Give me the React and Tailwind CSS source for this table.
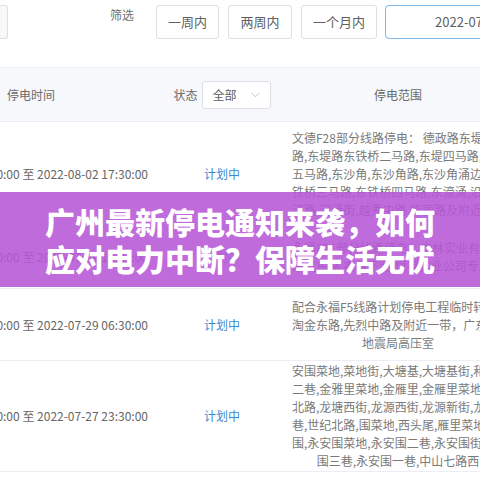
import React from "react";

const rows = [
  {
    h: "h-[104px]",
    time: "2022-08-02 08:00:00 至 2022-08-02 17:30:00",
    full: [
      "文德F28部分线路停电： 德政路东堤二马路,",
      "路,东堤路东铁桥二马路,东堤四马路,东堤",
      "五马路,东沙角,东沙角路,东沙角涌边,东",
      "铁桥三马路,东铁桥四马路,东濠涌,沿江",
    ],
    last: "江路,河涌街,越秀中路,华丽路及附近一带",
  },
  {
    h: "h-[63px]",
    time: "2022-07-29 08:00:00 至 2022-07-29 18:00:00",
    full: [
      "永福F21部分线路停电：农林实业有限公司",
      "东风东路,农林下路,恒福实业公司专变",
    ],
    last: null,
  },
  {
    h: "h-[72px]",
    time: "2022-07-29 00:00:00 至 2022-07-29 06:30:00",
    full: [
      "配合永福F5线路计划停电工程临时转供电：",
      "淘金东路,先烈中路及附近一带，广东省",
    ],
    last: "地震局高压室",
  },
  {
    h: "h-[111px]",
    time: "2022-07-27 08:00:00 至 2022-07-27 23:30:00",
    full: [
      "安围菜地,菜地街,大塘基,大塘基街,和平",
      "二巷,金雅里菜地,金雁里,金雁里菜地,金",
      "北路,龙塘西街,龙源西街,龙源新街,龙源",
      "巷,世纪北路,围菜地,西头尾,雁里菜地,永",
      "围,永安围菜地,永安围二巷,永安围街,永安",
    ],
    last: "围三巷,永安围一巷,中山七路西",
  },
];

function FilterButton({ label, w }) {
  return (
    <div
      className={`${w} h-[34px] shrink-0 flex items-center justify-center border border-[#dcdfe6] rounded-[3px] bg-white text-[13px] text-[#606060] whitespace-nowrap`}
    >
      {label}
    </div>
  );
}

export default function App() {
  return (
    <div className="relative w-[480px] h-[480px] overflow-hidden bg-white font-['Noto_Sans_CJK_SC',sans-serif]">
      {/* filter bar */}
      <div className="h-[68px] border-b border-[#ebeef5] flex items-start pt-[5px]">
        <div className="w-[8px] h-[34px] shrink-0 border border-l-0 border-[#dcdfe6] rounded-r-[3px] bg-[#f7f8fa]" />
        <div className="ml-[102px] mt-[1px] shrink-0 whitespace-nowrap text-[12px] leading-[18px] text-[#707070]">筛选</div>
        <div className="ml-[22px] flex gap-[9px] shrink-0">
          <FilterButton label="一周内" w="w-[63px]" />
          <FilterButton label="两周内" w="w-[64px]" />
          <FilterButton label="一个月内" w="w-[76px]" />
          <div className="ml-[-1px] w-[220px] h-[34px] shrink-0 flex items-center pl-[49px] border border-[#7db6e8] rounded-[4px] bg-white text-[13px] text-[#606060] whitespace-nowrap">
            2022-07-26 至 2022-08-26
          </div>
        </div>
      </div>

      {/* header */}
      <div className="grid grid-cols-[160px_124px_228px] h-[54px] bg-[#f6f8fb] border-b border-[#ebeef5] text-[12px] text-[#6a6a6a]">
        <div className="flex items-center pl-[7px]">停电时间</div>
        <div className="flex items-center justify-center gap-[4px]">
          <span>状态</span>
          <div className="w-[69px] h-[28px] flex items-center justify-between pl-[10px] pr-[10px] border border-[#dcdfe6] rounded-[3px] bg-white text-[12px] text-[#606060]">
            <span>全部</span>
            <svg width="9" height="6" viewBox="0 0 9 6" fill="none">
              <polyline points="0.5,0.8 4.5,4.8 8.5,0.8" stroke="#c0c4cc" strokeWidth="1" />
            </svg>
          </div>
        </div>
        <div className="flex items-center justify-center">停电范围</div>
      </div>

      {/* rows */}
      {rows.map((r, i) => (
        <div
          key={i}
          className={`grid grid-cols-[160px_124px_228px] ${r.h} border-b border-[#ebeef5]`}
        >
          <div className="flex items-center justify-end pr-[12px] overflow-hidden whitespace-nowrap text-[12px] text-[#666]">
            <span className="shrink-0">{r.time}</span>
          </div>
          <div className="flex items-center justify-center text-[12px] text-[#3a8ad0]">计划中</div>
          <div className="flex flex-col justify-center px-[8px] text-[12px] leading-[18px] text-[#7a7a7a]">
            {r.full.map((l, j) => (
              <div key={j} className="whitespace-nowrap text-left">
                {l}
              </div>
            ))}
            {r.last && <div className="whitespace-nowrap text-center">{r.last}</div>}
          </div>
        </div>
      ))}
      <div className="h-[40px]" />

      {/* overlay banner */}
      <div className="absolute left-0 right-0 top-[192px] h-[95px] bg-[#b657d6]/[0.88] flex flex-col items-center justify-center">
        <div className="text-white font-black text-[30px] leading-[37px] text-center whitespace-nowrap">
          广州最新停电通知来袭，如何
        </div>
        <div className="text-white font-black text-[30px] leading-[37px] text-center whitespace-nowrap">
          应对电力中断？保障生活无忧
        </div>
      </div>
    </div>
  );
}
